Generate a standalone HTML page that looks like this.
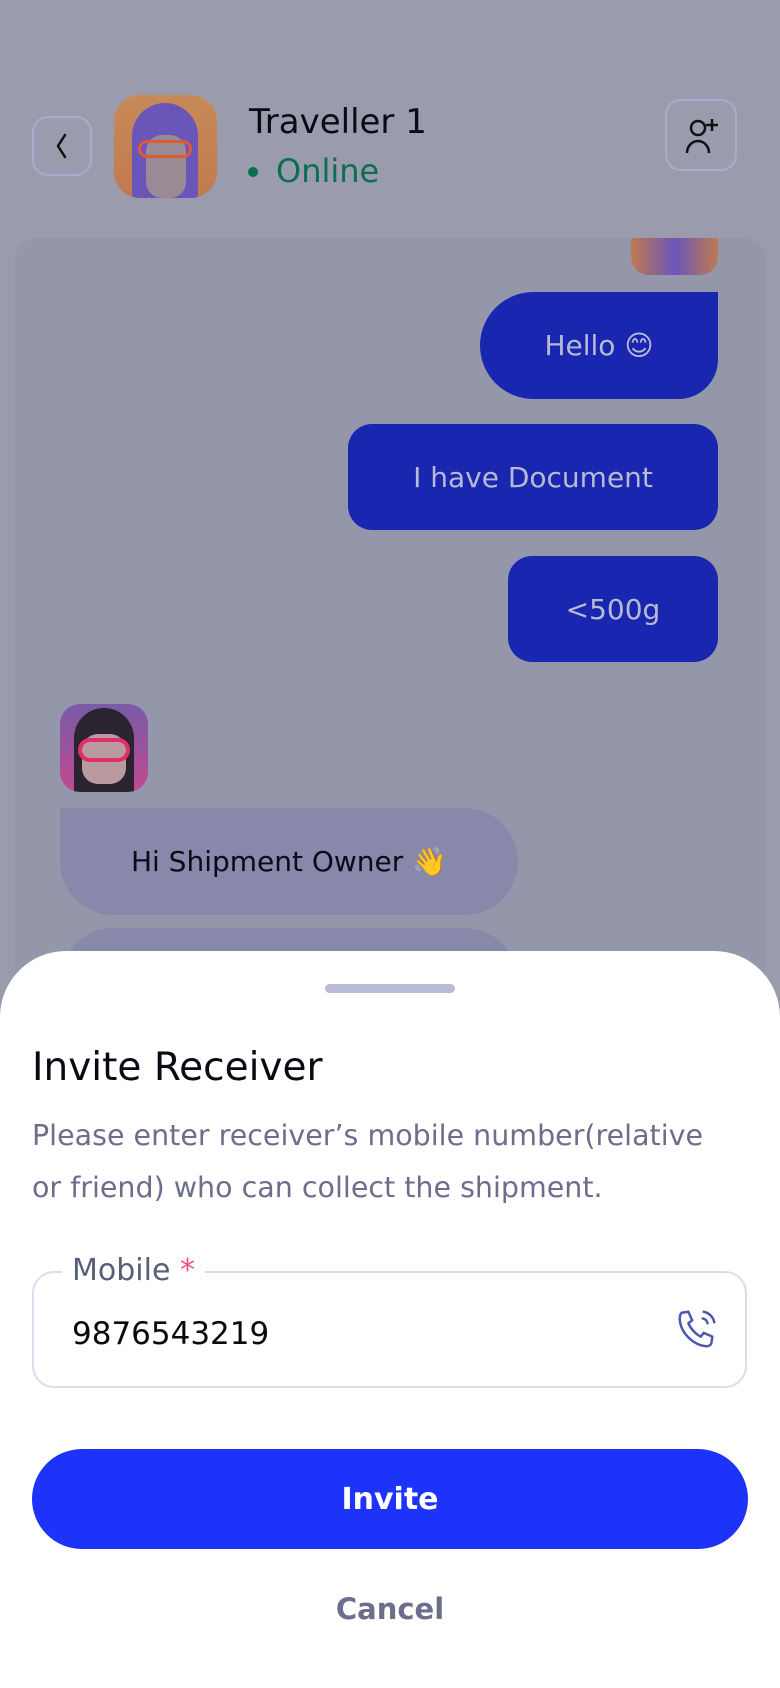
<!DOCTYPE html>
<html><head><meta charset="utf-8"><style>
*{margin:0;padding:0;box-sizing:border-box}
body{width:780px;height:1688px;overflow:hidden;background:#9a9cad;font-family:"DejaVu Sans","Liberation Sans",sans-serif;position:relative}
.abs{position:absolute}
.btn{border:2px solid #a9abcc;border-radius:16px}
.bub{position:absolute;color:#b8bad4;font-size:28px;display:flex;align-items:center;justify-content:center;background:#1826b0}
</style></head><body>
<div class="abs btn" style="left:32px;top:116px;width:60px;height:60px"></div>
<svg class="abs" style="left:50px;top:132px" width="24" height="28" viewBox="0 0 24 28"><path d="M15 3 L8 14 L15 25" fill="none" stroke="#111" stroke-width="2.5" stroke-linecap="round"/></svg>
<div class="abs" style="left:114px;top:95px;width:103px;height:103px;border-radius:26px;background:linear-gradient(#c88a58,#c07a50);overflow:hidden">
 <div class="abs" style="left:18px;top:8px;width:66px;height:100px;border-radius:33px 33px 10px 10px;background:#6a56b8"></div>
 <div class="abs" style="left:32px;top:40px;width:40px;height:63px;border-radius:16px;background:#9a8a96"></div>
 <div class="abs" style="left:24px;top:45px;width:54px;height:18px;border:3px solid #e05a30;border-radius:9px"></div>
</div>
<div class="abs" style="left:249px;top:102px;font-size:34px;color:#0a0a14">Traveller 1</div>
<div class="abs" style="left:248px;top:167px;width:10px;height:10px;border-radius:50%;background:#0a6e50"></div>
<div class="abs" style="left:276px;top:152px;font-size:32px;color:#0a6e50">Online</div>
<div class="abs btn" style="left:665px;top:99px;width:72px;height:72px"></div>
<svg class="abs" style="left:684px;top:116px" width="48" height="40" viewBox="0 0 48 40"><circle cx="14" cy="12" r="7" fill="none" stroke="#111" stroke-width="2.5"/><path d="M3 37 a11 12 0 0 1 22 0" fill="none" stroke="#111" stroke-width="2.5"/><path d="M28 3v12M22 9h12" stroke="#111" stroke-width="2.5"/></svg>

<div class="abs" style="left:15px;top:238px;width:751px;height:800px;border-radius:22px;background:#9496a9"></div>
<div class="abs" style="left:631px;top:238px;width:87px;height:37px;border-radius:0 0 18px 18px;background:linear-gradient(90deg,#c07a50,#6a56b8,#c07a50)"></div>
<div class="bub" style="left:480px;top:292px;width:238px;height:107px;border-radius:54px 0 40px 54px">Hello 😊</div>
<div class="bub" style="left:348px;top:424px;width:370px;height:106px;border-radius:24px">I have Document</div>
<div class="bub" style="left:508px;top:556px;width:210px;height:106px;border-radius:24px">&lt;500g</div>
<div class="abs" style="left:60px;top:704px;width:88px;height:88px;border-radius:20px;background:linear-gradient(#7a5aa8,#c04a90);overflow:hidden">
 <div class="abs" style="left:14px;top:4px;width:60px;height:90px;border-radius:30px 30px 8px 8px;background:#2a2430"></div>
 <div class="abs" style="left:22px;top:30px;width:44px;height:50px;border-radius:16px;background:#b89aa0"></div>
 <div class="abs" style="left:18px;top:34px;width:52px;height:24px;border:4px solid #e0306a;border-radius:12px"></div>
</div>
<div class="bub" style="left:60px;top:808px;width:458px;height:107px;border-radius:0 54px 54px 54px;background:#8889aa;color:#0a0a18">Hi Shipment Owner 👋</div>
<div class="bub" style="left:60px;top:928px;width:458px;height:107px;border-radius:54px;background:#8889aa"></div>

<div class="abs" style="left:0;top:951px;width:780px;height:737px;background:#fff;border-radius:66px 66px 0 0"></div>
<div class="abs" style="left:325px;top:984px;width:130px;height:9px;border-radius:5px;background:#b8bad8"></div>
<div class="abs" style="left:32px;top:1045px;font-size:39px;color:#0a0a14">Invite Receiver</div>
<div class="abs" style="left:32px;top:1110px;white-space:nowrap;font-size:28.5px;line-height:52px;color:#6c6e8c">Please enter receiver’s mobile number(relative<br>or friend) who can collect the shipment.</div>
<div class="abs" style="left:32px;top:1271px;width:715px;height:117px;border:2px solid #dcdcf0;border-radius:22px"></div>
<div class="abs" style="left:62px;top:1253px;padding:0 10px;background:#fff;font-size:30px;color:#586078">Mobile <span style="color:#f0508a">*</span></div>
<div class="abs" style="left:72px;top:1316px;font-size:31px;color:#0a0a0a">9876543219</div>
<svg class="abs" style="left:674px;top:1306px" width="46" height="46" viewBox="0 0 24 24"><path d="M4 3.5 L7.5 3 L9.5 7.5 L7.5 9 C8.5 11.5 11 14.5 14 16 L15.5 14 L20 16 L19.5 19.5 C19 20.5 18 21 17 21 C10 20.5 3.5 14 3 7 C3 5 3.3 4 4 3.5Z" fill="none" stroke="#4a58b0" stroke-width="1.3" stroke-linejoin="round"/><path d="M15 6.5a3 3 0 0 1 2.5 2.5M15.5 3a7 7 0 0 1 5.5 5.5" fill="none" stroke="#4a58b0" stroke-width="1.3" stroke-linecap="round"/></svg>
<div class="abs" style="left:32px;top:1449px;width:716px;height:100px;border-radius:50px;background:#1e33fa;color:#fff;font-size:30px;font-weight:bold;display:flex;align-items:center;justify-content:center">Invite</div>
<div class="abs" style="left:0;top:1592px;width:780px;text-align:center;font-size:29px;font-weight:bold;color:#6c6e8c">Cancel</div>
</body></html>
